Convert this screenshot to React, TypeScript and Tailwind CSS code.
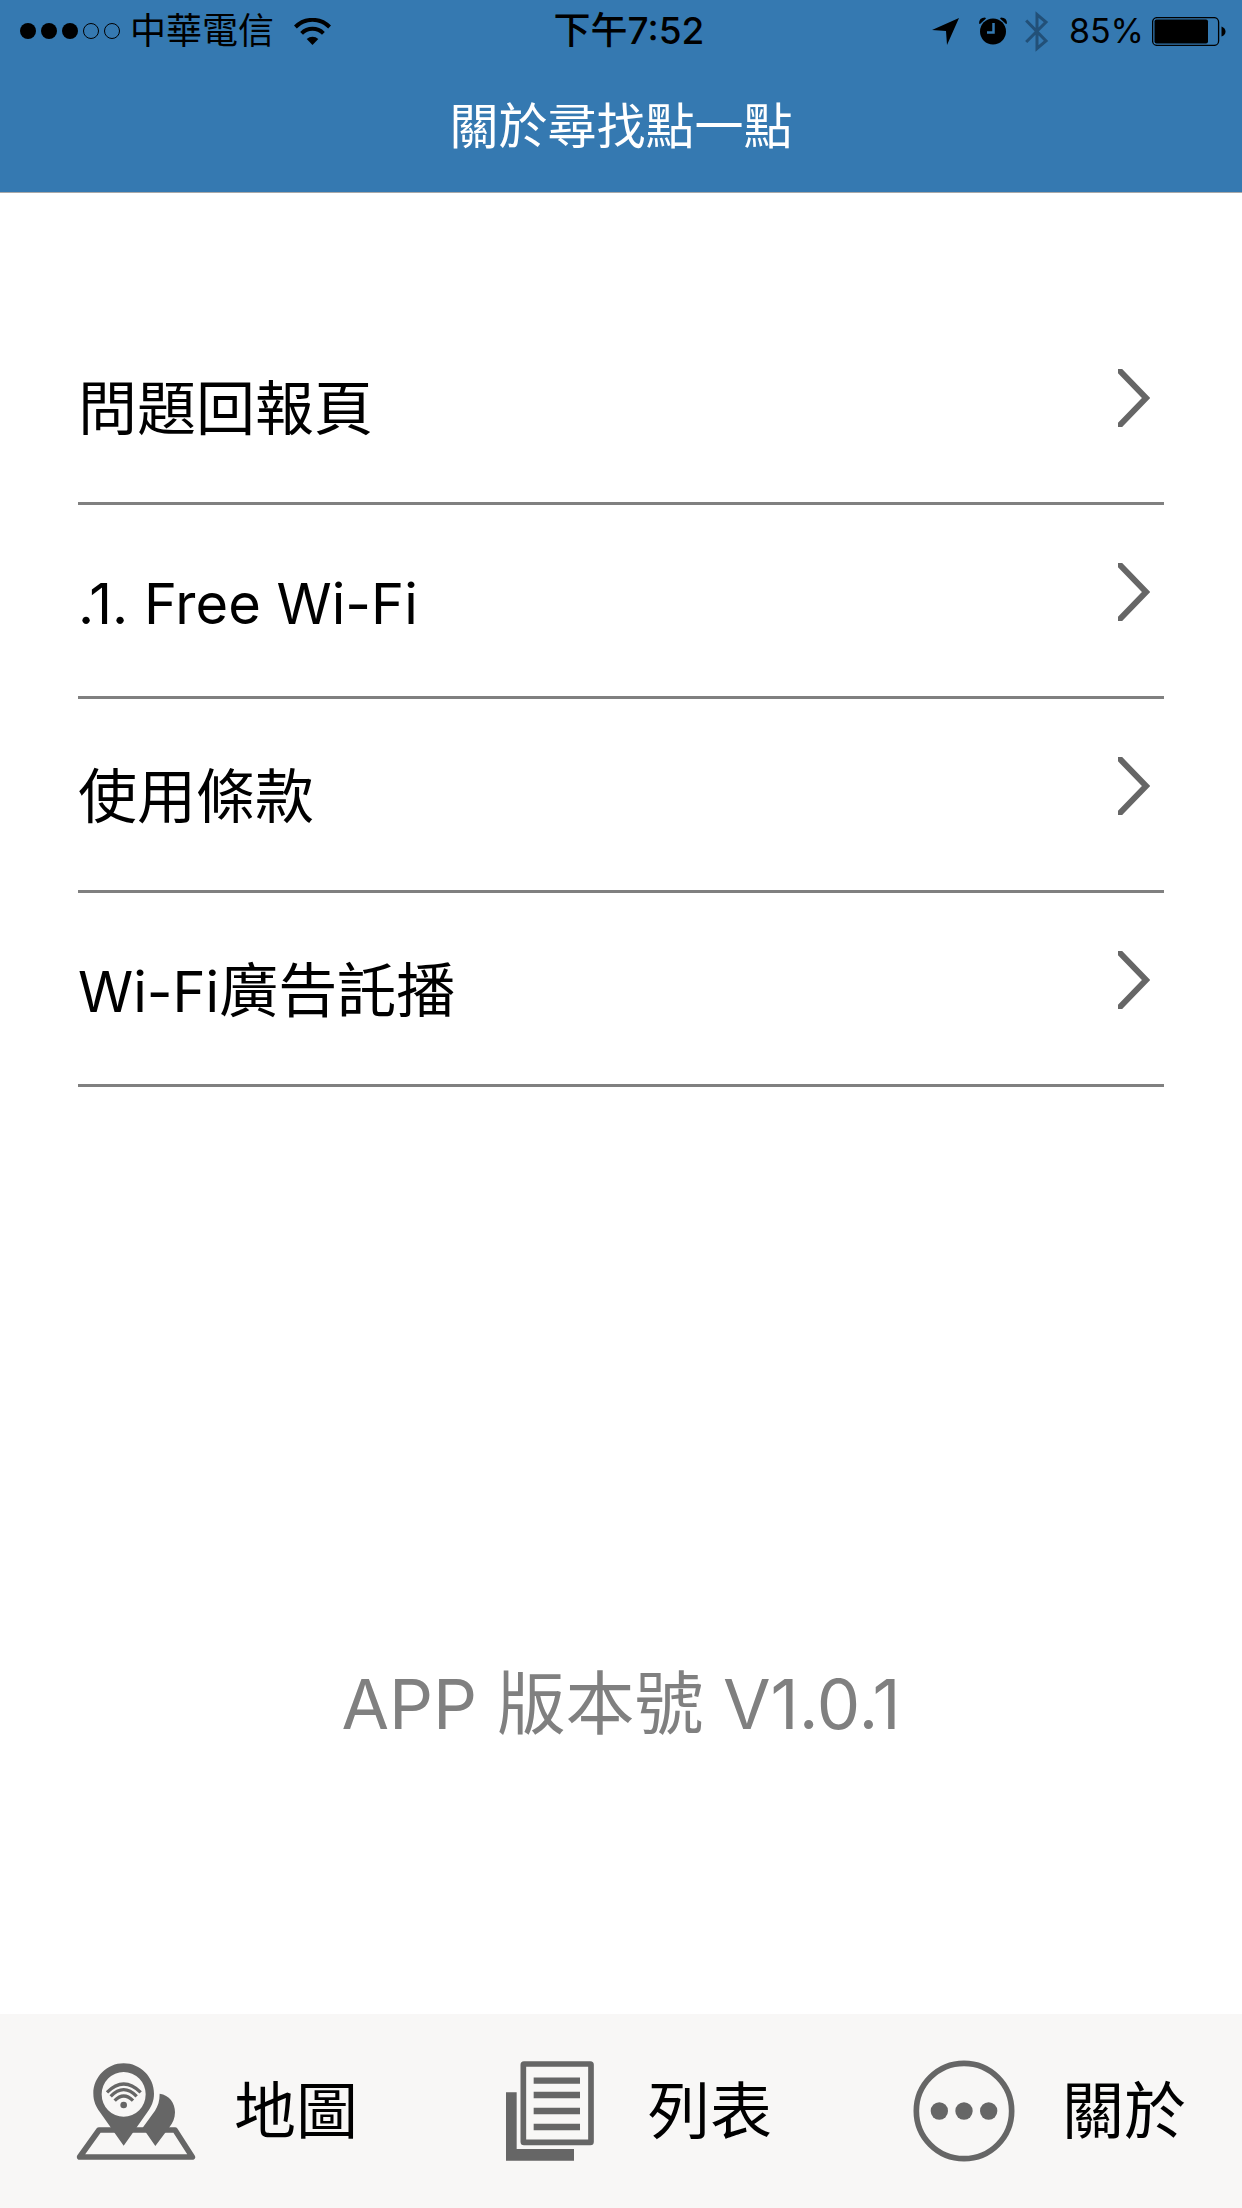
const StatusBar = () => {
  return (
    <div className="grid h-[60px] grid-cols-[1fr_auto_1fr] items-center pl-5 pr-4 text-[36px] leading-[62px] text-black">
      <div className="flex items-center">
        <div className="flex gap-[5px]">
          <span className="size-4 rounded-full bg-black" />
          <span className="size-4 rounded-full bg-black" />
          <span className="size-4 rounded-full bg-black" />
          <span className="size-4 rounded-full border border-black" />
          <span className="size-4 rounded-full border border-black" />
        </div>
        <span className="ml-[10px]">中華電信</span>
        <svg className="ml-5 h-[27px] w-[37px]" viewBox="0 0 37 27" fill="none" stroke="#000" strokeWidth="4">
          <path d="M1.4 9a24 24 0 0 1 34.2 0" />
          <path d="M7.6 15.3a15.5 15.5 0 0 1 21.8 0" />
          <path d="M18.5 27l-5.8-6a8.4 8.4 0 0 1 11.6 0z" fill="#000" stroke="none" />
        </svg>
      </div>
      <div className="pl-3 text-[37px] font-medium">下午7:52</div>
      <div className="flex items-center justify-end">
        <svg className="h-[27px] w-[27px]" viewBox="0 0 27 27">
          <path d="M27 0L15 27L14 13L0 12z" />
        </svg>
        <svg className="ml-5 h-7 w-7" viewBox="0 0 28 28">
          <circle cx="14" cy="14.5" r="13" />
          <path d="M0 6.5Q0 .5 6 .5L7 1.5L1 7zM28 6.5Q28 .5 22 .5L21 1.5L27 7z" />
          <path d="M14.5 6v9.500H8" fill="none" stroke="#3579b1" strokeWidth="2.5" />
        </svg>
        <svg className="ml-[18px] h-[41px] w-6" viewBox="0 0 24 41" fill="none" stroke="#225078" strokeWidth="3">
          <path d="M1.2 9.5L21 30L12 37.5V3.5L21 11L1.2 31" />
        </svg>
        <span className="ml-5 text-[34px]">85%</span>
        <svg className="ml-2 h-[29px] w-[74px]" viewBox="0 0 74 29">
          <rect x=".6" y=".6" width="66" height="27.8" rx="4.5" fill="none" stroke="#000" strokeWidth="1.3" />
          <rect x="2.5" y="2.5" width="53.5" height="24" rx="2" />
          <path d="M69.500 9.500q4 1.500 4 5t-4 5z" />
        </svg>
      </div>
    </div>
  );
};

const MapIcon = () => (
  <svg className="h-[99px] w-[120px]" viewBox="45 183 360 297">
    <path
      d="M114 387H342L394 468H56z"
      fill="none"
      stroke="#666"
      strokeWidth="17"
      strokeLinejoin="round"
    />
    <path
      fill="#666"
      d="M296 278C325 282 342 306 342 334C342 352 335 366 325 379L283 435L245 380L282 329C291 315 296 299 296 278z"
    />
    <path
      fill="#666"
      fillRule="evenodd"
      d="M188 187C238 187 279 228 279 278C279 301 270 318 260 332L188 434L116 332C106 318 97 301 97 278C97 228 138 187 188 187zM188 213A66 67 0 1 0 188 347A66 67 0 1 0 188 213z"
    />
    <g fill="none" stroke="#666" strokeWidth="10">
      <path d="M138 274Q188 224 239 274" />
      <path d="M149 286Q188 246 227 286" />
      <path d="M161 299Q188 271 216 299" />
    </g>
    <circle cx="188" cy="312" r="10" fill="#666" />
  </svg>
);

const ListIcon = () => (
  <svg className="h-[100px] w-[88px]" viewBox="78 182 264 300">
    <path d="M78 276H110V446H282V481H78z" fill="#666" />
    <rect x="130" y="191" width="203" height="235" rx="2" fill="none" stroke="#666" strokeWidth="17" />
    <path d="M161 241H300M161 284H300M161 332H300M161 380H300" stroke="#666" strokeWidth="19" />
  </svg>
);

const AboutIcon = () => (
  <svg className="h-[102px] w-[102px]" viewBox="0 0 306 306" fill="#666">
    <circle cx="153" cy="153" r="143" fill="none" stroke="#666" strokeWidth="17" />
    <circle cx="79" cy="153" r="26" />
    <circle cx="153" cy="153" r="26" />
    <circle cx="227" cy="153" r="26" />
  </svg>
);

const links = [
  { latin: "", cjk: "問題回報頁" },
  { latin: ".1. Free Wi-Fi", cjk: "" },
  { latin: "", cjk: "使用條款" },
  { latin: "Wi-Fi", cjk: "廣告託播" },
];

const tabs = [
  { label: "地圖", icon: <MapIcon /> },
  { label: "列表", icon: <ListIcon /> },
  { label: "關於", icon: <AboutIcon /> },
];

export default function App() {
  return (
    <div className="flex min-h-screen flex-col bg-white font-['Inter','Noto_Sans_CJK_TC',sans-serif] text-black">
      <header className="border-b border-[#a9a9a9] bg-[#3579b1]">
        <StatusBar />
        <h1 className="h-[132px] text-center text-[49px] leading-[134px] text-white">關於尋找點一點</h1>
      </header>

      <main className="flex flex-1 flex-col px-[78px] pt-[118px]">
        <ul>
          {links.map((link) => (
            <li key={link.latin + link.cjk} className="border-b-3 border-[#808080]">
              <a href="#" className="flex h-[191px] items-start justify-between pr-[14px] text-[59px] leading-[196px]">
                <span>
                  {link.latin && <span className="text-[56px]">{link.latin}</span>}
                  {link.cjk}
                </span>
                <svg className="mt-[58px] h-[58px] w-8" viewBox="0 0 32 58" fill="none" stroke="#666" strokeWidth="6">
                  <path d="M0 0L28 29L0 58" />
                </svg>
              </a>
            </li>
          ))}
        </ul>
        <p className="mt-auto pb-[260px] text-center text-[69px] leading-[100px] text-[#808080]">
          APP 版本號 V1.0.1
        </p>
      </main>

      <nav className="grid h-[194px] grid-cols-3 bg-[#f8f7f6]">
        {tabs.map((tab) => (
          <button key={tab.label} className="flex cursor-pointer items-center gap-[38px] pl-[76px] text-[62px]">
            <span className="flex w-[120px] justify-center">{tab.icon}</span>
            {tab.label}
          </button>
        ))}
      </nav>
    </div>
  );
}
